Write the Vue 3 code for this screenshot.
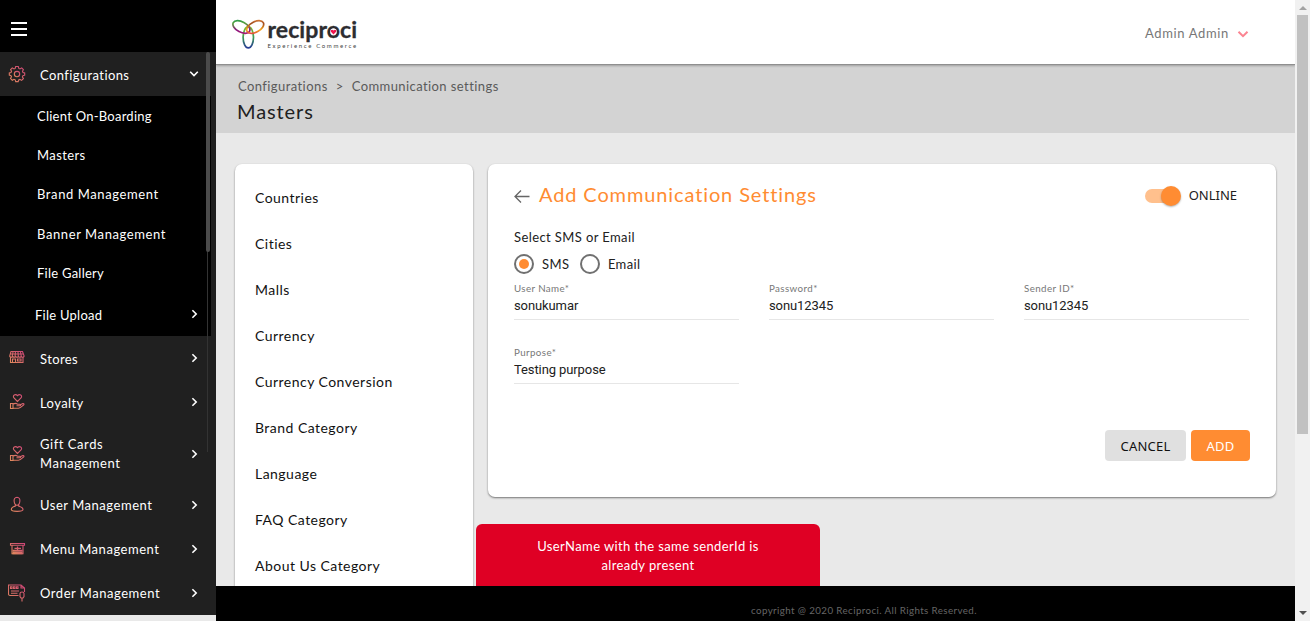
<script setup>
const subItems = [
  { label: 'Client On-Boarding', spacing: 'snug' },
  { label: 'Masters', spacing: '' },
  { label: 'Brand Management', spacing: 'loose' },
  { label: 'Banner Management', spacing: 'loose' },
  { label: 'File Gallery', spacing: 'snug' },
]
const navItems = [
  { label: 'Stores', icon: 'store' },
  { label: 'Loyalty', icon: 'heart' },
  { label: 'Gift Cards Management', icon: 'heart', tall: true },
  { label: 'User Management', icon: 'user', wide: true },
  { label: 'Menu Management', icon: 'menu', wide: true },
  { label: 'Order Management', icon: 'order', wide: true },
]
const masters = ['Countries', 'Cities', 'Malls', 'Currency', 'Currency Conversion', 'Brand Category', 'Language', 'FAQ Category', 'About Us Category']
const fields = [
  { label: 'User Name*', value: 'sonukumar' },
  { label: 'Password*', value: 'sonu12345' },
  { label: 'Sender ID*', value: 'sonu12345' },
  { label: 'Purpose*', value: 'Testing purpose' },
]
</script>

<template>
  <div class="app">
    <svg class="defs" width="0" height="0">
      <defs>
        <linearGradient id="warm" x1="0" y1="1" x2="1" y2="0">
          <stop offset="0" stop-color="#e08a5c" /><stop offset="1" stop-color="#cf4478" />
        </linearGradient>
      </defs>
    </svg>

    <aside class="sidebar">
      <div class="burger"><i></i><i></i><i></i></div>
      <nav>
        <div class="row">
          <svg class="ico" width="18" height="18" viewBox="0 0 18 18" fill="none" stroke="url(#warm)" stroke-width="1.1">
            <path d="M7.700 1.500h2.600l.5 1.900 1.200.5 1.700-1 1.700 1.700-.9 1.700.5 1.200 1.700.4v2.300l-1.800.5-.5 1.200 1 1.700-1.800 1.800-1.700-1-1.200.5-.5 1.700H7.700l-.5-1.800-1.200-.5-1.700 1-1.800-1.800 1-1.700-.5-1.200-1.700-.5V7.900L3 7.500l.5-1.200-.9-1.700 1.700-1.700 1.700 1 1.200-.5z" />
            <circle cx="9" cy="9.100" r="2.700" />
          </svg>
          <span class="label">Configurations</span>
          <svg class="chev" width="10" height="10" viewBox="0 0 10 10"><path d="M1.200 2.800 5 6.600l3.800-3.800" /></svg>
        </div>
        <div class="sub">
          <div v-for="s in subItems" :key="s.label" class="subitem" :class="s.spacing">{{ s.label }}</div>
          <div class="row upload">
            <span class="label snug">File Upload</span>
            <svg class="chev" width="10" height="10" viewBox="0 0 10 10"><path d="M3.400 1.200 7.200 5 3.400 8.800" /></svg>
          </div>
        </div>
        <div v-for="n in navItems" :key="n.label" class="row" :class="{ tall: n.tall, wide: n.wide }">
          <svg class="ico" width="18" height="18" viewBox="0 0 18 18" fill="none" stroke="url(#warm)" stroke-width="1.1">
            <g v-if="n.icon === 'store'">
              <path d="M3 2.500h11.500l1.500 4v1q-1.400 1.500-2.800 0-1.400 1.500-2.800 0-1.400 1.500-2.800 0-1.400 1.500-2.800 0-1.400 1.500-3 0v-1zM5 3 4.200 7.500M7.400 3l-.3 4.500M10 3l.3 4.500M12.500 3l.8 4.500M2 5h13.500M2.500 8.500v5h12.500v-5M4.500 13v-3h3v3M9.500 10h3.500v2h-3.500z" />
              <path d="M1 13.800h15.500" stroke-width="1.500" />
            </g>
            <g v-else-if="n.icon === 'heart'">
              <path d="M9.500 8.500 6 5C4 2.500 7.500.3 9.500 2.700c2-2.400 5.500-.2 3.500 2.300zM2.500 10.500h2.500v5H2.500zM5 11c2-1 3.500-.8 4.500.2h2.200c1.200 0 1.200 1.600 0 1.600H8.500M11.800 12l3-1.500c1.200-.3 1.600.8.700 1.500-2 1.800-3.300 3.200-5 3.200H5" />
            </g>
            <g v-else-if="n.icon === 'user'">
              <path d="M9 1.200c-4.600.3-3 8 0 8s4.600-7.700 0-8zM7.200 8.700v1.500C4.500 10.800 3.300 12 3.300 13.600c0 2.300 11.700 2.300 11.700 0 0-1.600-1.500-2.800-4.200-3.400V8.700" />
            </g>
            <g v-else-if="n.icon === 'menu'">
              <path d="M2.500 3.500h14v1.700h-14zM4 5.500v8.200h11V5.500" />
              <path d="M4.500 10.500h10M4.500 12.200h10M4.500 13.500h10M6.500 8.300h2M11 8.300h2M9.500 6.500v3.500M8 8.300h3" stroke-width="1.300" />
            </g>
            <g v-else>
              <path d="M10.500 11.500H2c-1 0-1.500-.5-1.500-1.500V1h12.500l3.500 3v4M13 1v3h3.500M2.500 2.800h1.500v1.700H2.500zM5.500 2.800H7v1.700H5.500zM8.500 2.800H10v1.700H8.500zM3 7h8M3 9.300h6.500M12 9.500c0-2 4-2 4 0v3l-1 1.500h-2l-1-1.500zM14 14v3.500" />
            </g>
          </svg>
          <span class="label">{{ n.label }}</span>
          <svg class="chev" width="10" height="10" viewBox="0 0 10 10"><path d="M3.400 1.200 7.200 5 3.400 8.800" /></svg>
        </div>
      </nav>
      <div class="track"></div>
      <div class="thumb"></div>
    </aside>

    <div class="main">
      <header class="top">
        <svg class="logo" width="130" height="36" viewBox="0 0 130 36">
          <defs>
            <linearGradient id="lg" x1="0" x2="1" y2="1"><stop offset="0" stop-color="#139a55" /><stop offset=".3" stop-color="#5aa03c" /><stop offset=".65" stop-color="#8c1680" /><stop offset="1" stop-color="#b31c6a" /></linearGradient>
            <linearGradient id="lo" x1="0" y1="1" x2="1" y2="0"><stop offset="0" stop-color="#d81b50" /><stop offset=".35" stop-color="#f7a81b" /><stop offset=".7" stop-color="#9f4b20" /><stop offset="1" stop-color="#f39443" /></linearGradient>
            <linearGradient id="lb" x1="0" y1="0" x2="0" y2="1"><stop offset="0" stop-color="#85b92d" /><stop offset=".5" stop-color="#3c9b55" /><stop offset="1" stop-color="#263a96" /></linearGradient>
          </defs>
          <g fill="none" stroke-width="1.700">
            <ellipse cx="16.300" cy="21.300" rx="5.200" ry="10.600" stroke="url(#lb)" />
            <ellipse cx="9.400" cy="11" rx="9.200" ry="5.200" transform="rotate(28 9.400 11)" stroke="url(#lg)" />
            <ellipse cx="23.200" cy="11" rx="9.200" ry="5.200" transform="rotate(-28 23.200 11)" stroke="url(#lo)" />
          </g>
          <text x="35.500" y="21.500" class="brand" textLength="89.500">reciproci</text>
          <circle cx="101.500" cy="15.800" r="3.300" fill="#fff" />
          <path d="M101.500 18.500 98.900 15.800c-1-1.700 1.300-2.900 2.600-1.300 1.300-1.600 3.600-.4 2.600 1.300z" fill="#f0154f" />
          <text x="35.500" y="31.500" class="tag" textLength="89">Experience Commerce</text>
        </svg>
        <div class="account">
          <span>Admin Admin</span>
          <svg width="12" height="8" viewBox="0 0 12 8"><path d="M1.500 1.700 6 6.200l4.500-4.500" fill="none" stroke="#fb8491" stroke-width="2" /></svg>
        </div>
      </header>

      <section class="band">
        <div class="crumbs"><span>Configurations</span><b>&gt;</b><span>Communication settings</span></div>
        <h1>Masters</h1>
      </section>

      <div class="content">
        <ul class="card list">
          <li v-for="m in masters" :key="m">{{ m }}</li>
        </ul>
        <section class="card form">
          <div class="head">
            <svg width="16" height="14" viewBox="0 0 16 14"><path d="M15.500 7.500H1M7 1.500l-6 6 6 6" fill="none" stroke="#666" stroke-width="1.300" /></svg>
            <h2>Add Communication Settings</h2>
            <span class="switch"><i></i></span>
            <span class="online">ONLINE</span>
          </div>
          <p class="ask">Select SMS or Email</p>
          <div class="radios">
            <span class="radio on"></span><label>SMS</label>
            <span class="radio"></span><label>Email</label>
          </div>
          <div class="fields">
            <div v-for="f in fields" :key="f.label" class="field">
              <small>{{ f.label }}</small>
              <div class="value">{{ f.value }}</div>
            </div>
          </div>
          <div class="actions">
            <button class="cancel">CANCEL</button>
            <button class="add">ADD</button>
          </div>
        </section>
      </div>

      <div class="toast">UserName with the same senderId is<br />already present</div>
      <footer>copyright @ 2020 Reciproci. All Rights Reserved.</footer>
    </div>

    <div class="pagebar">
      <i class="up"></i>
      <div class="pagethumb"></div>
      <i class="down"></i>
    </div>
  </div>
</template>

<style>
body { margin: 0; overflow: hidden; }
</style>

<style scoped>
* { box-sizing: border-box; }
.app { position: relative; display: flex; width: 1310px; height: 621px; overflow: hidden; background: #e9e9e9; font: 13px/19px Lato, sans-serif; letter-spacing: .4px; color: #212121; }
.defs { position: absolute; }
.sidebar { position: relative; width: 216px; height: 615px; background: #202020; color: #fff; flex: none; }
.burger { height: 52px; background: #000; padding: 22px 11px 0; display: flex; flex-direction: column; gap: 4px; }
.burger i { width: 16px; height: 2px; background: #fff; flex: none; }
.row { height: 44px; display: flex; align-items: center; padding: 2px 17px 0 8px; }
.row.tall { height: 59px; padding-top: 0; letter-spacing: .55px; }
.row .ico { width: 18px; margin: -2px 14px 0 0; flex: none; }
.row .label { width: 130px; flex: none; }
.row.tall .label { width: 110px; }
.row.wide { letter-spacing: .53px; padding-top: 1px; }
.chev { margin: -2px 0 0 auto; fill: none; stroke: #fff; stroke-width: 1.6; }
.tall .chev { margin-top: 0; }
.row.tall .ico { margin-top: 0; }
.sub { width: 211px; height: 240px; background: #000; }
.subitem { height: 39.2px; padding-left: 37px; line-height: 41px; }
.snug { letter-spacing: .25px; }
.loose { letter-spacing: .6px; }
.row.upload { padding: 3px 12px 0 35px; }
.thumb { position: absolute; left: 206px; top: 52px; width: 4px; height: 200px; border-radius: 3px; background: #4b4b4b; }
.track { position: absolute; left: 207px; top: 52px; width: 1px; height: 400px; background: #333; }
.main { position: relative; width: 1079px; height: 621px; overflow: hidden; }
.top { position: relative; height: 65px; background: #fff; border-bottom: 1px solid #8f8f8f; box-shadow: 0 1px 2px rgba(0,0,0,.25); display: flex; justify-content: space-between; padding: 0 46px 0 16px; }
.logo { margin-top: 16px; }
.brand { font: 700 23px Lato, sans-serif; letter-spacing: 0; fill: #2d2d30; stroke: #2d2d30; stroke-width: .3px; }
.tag { font: 6px Lato, sans-serif; fill: #444; }
.account { display: flex; align-items: center; gap: 8px; padding-top: 3px; color: #777; letter-spacing: .65px; }
.band { height: 68px; background: #d3d3d3; padding: 12px 22px; }
.crumbs { display: flex; color: #5a5a5a; letter-spacing: .42px; }
.crumbs b { font-weight: 400; margin: 0 8px; }
h1 { font: 20px/26px Lato, sans-serif; letter-spacing: .9px; margin: 2px 0 0 -1px; color: #212121; }
.content { display: flex; align-items: flex-start; gap: 15px; padding: 31px 19px; }
.card { background: #fff; border-radius: 7px; box-shadow: 0 1px 2px rgba(0,0,0,.5); }
.list { width: 238px; height: 500px; margin: 0; padding: 11px 20px; list-style: none; font-size: 14px; color: #111; letter-spacing: .47px; }
.list li { height: 46px; line-height: 45px; }
.form { width: 788px; height: 333px; padding: 15px 26px; }
.head { display: flex; align-items: center; height: 32px; padding-top: 1px; }
.head h2 { font: 20px/26px Lato, sans-serif; letter-spacing: .88px; color: #ff8c32; margin: -4px auto 0 9px; }
.switch { position: relative; width: 34px; height: 14px; border-radius: 7px; background: #ffc08d; margin-right: 10px; }
.switch i { position: absolute; right: -2px; top: -3px; width: 20px; height: 20px; border-radius: 50%; background: #ff8c32; box-shadow: 0 1px 2px rgba(0,0,0,.3); }
.online { font-family: 'Noto Sans', sans-serif; letter-spacing: 0; margin-right: 13px; }
.ask { margin: 17px 0 0; line-height: 19px; }
.radios { display: flex; align-items: center; height: 20px; margin-top: 7px; }
.radio { width: 20px; height: 20px; border: 2px solid #707070; border-radius: 50%; margin-right: 8px; display: grid; place-items: center; }
.radio.on::after { content: ''; width: 10px; height: 10px; border-radius: 50%; background: #ff8c32; }
.radios label { margin-right: 10.500px; }
.fields { display: grid; grid-template-columns: repeat(3, 225px); column-gap: 30px; row-gap: 24px; padding-top: 6px; }
.field { height: 40px; border-bottom: 1px solid #e6e6e6; }
.field small { display: block; font-size: 9.750px; line-height: 16px; color: #777; letter-spacing: .4px; }
.value { font: 13px/18px Roboto, sans-serif; letter-spacing: -.1px; margin-top: 1px; }
.actions { display: flex; justify-content: flex-end; gap: 5px; margin-top: 46px; }
button { border: 0; border-radius: 4px; height: 31px; font: 13px 'Noto Sans', sans-serif; letter-spacing: .2px; padding: 1px 0 0; }
.cancel { width: 81px; background: #e0e0e0; color: #111; }
.add { width: 59px; background: #ff8c32; color: #fff; }
.toast { position: absolute; left: 260px; top: 524px; width: 344px; height: 80px; padding-top: 13px; border-radius: 6px; background: #df0024; color: #fff; text-align: center; }
footer { position: absolute; left: 0; right: 0; top: 586px; height: 35px; padding: 15px 0 0 535px; background: #000; color: #666; font-size: 9.750px; line-height: 18px; letter-spacing: .4px; }
.pagebar { display: flex; flex-direction: column; align-items: center; width: 15px; background: #f1f1f1; }
.pagethumb { width: 11px; height: 419px; background: #c1c1c1; margin: 5px 0 0; }
.up { margin-top: 6px; border: 4px solid transparent; border-top: 0; border-bottom-color: #a3a3a3; }
.down { margin-top: auto; margin-bottom: 6px; border: 4px solid transparent; border-bottom: 0; border-top-color: #505050; }
</style>
